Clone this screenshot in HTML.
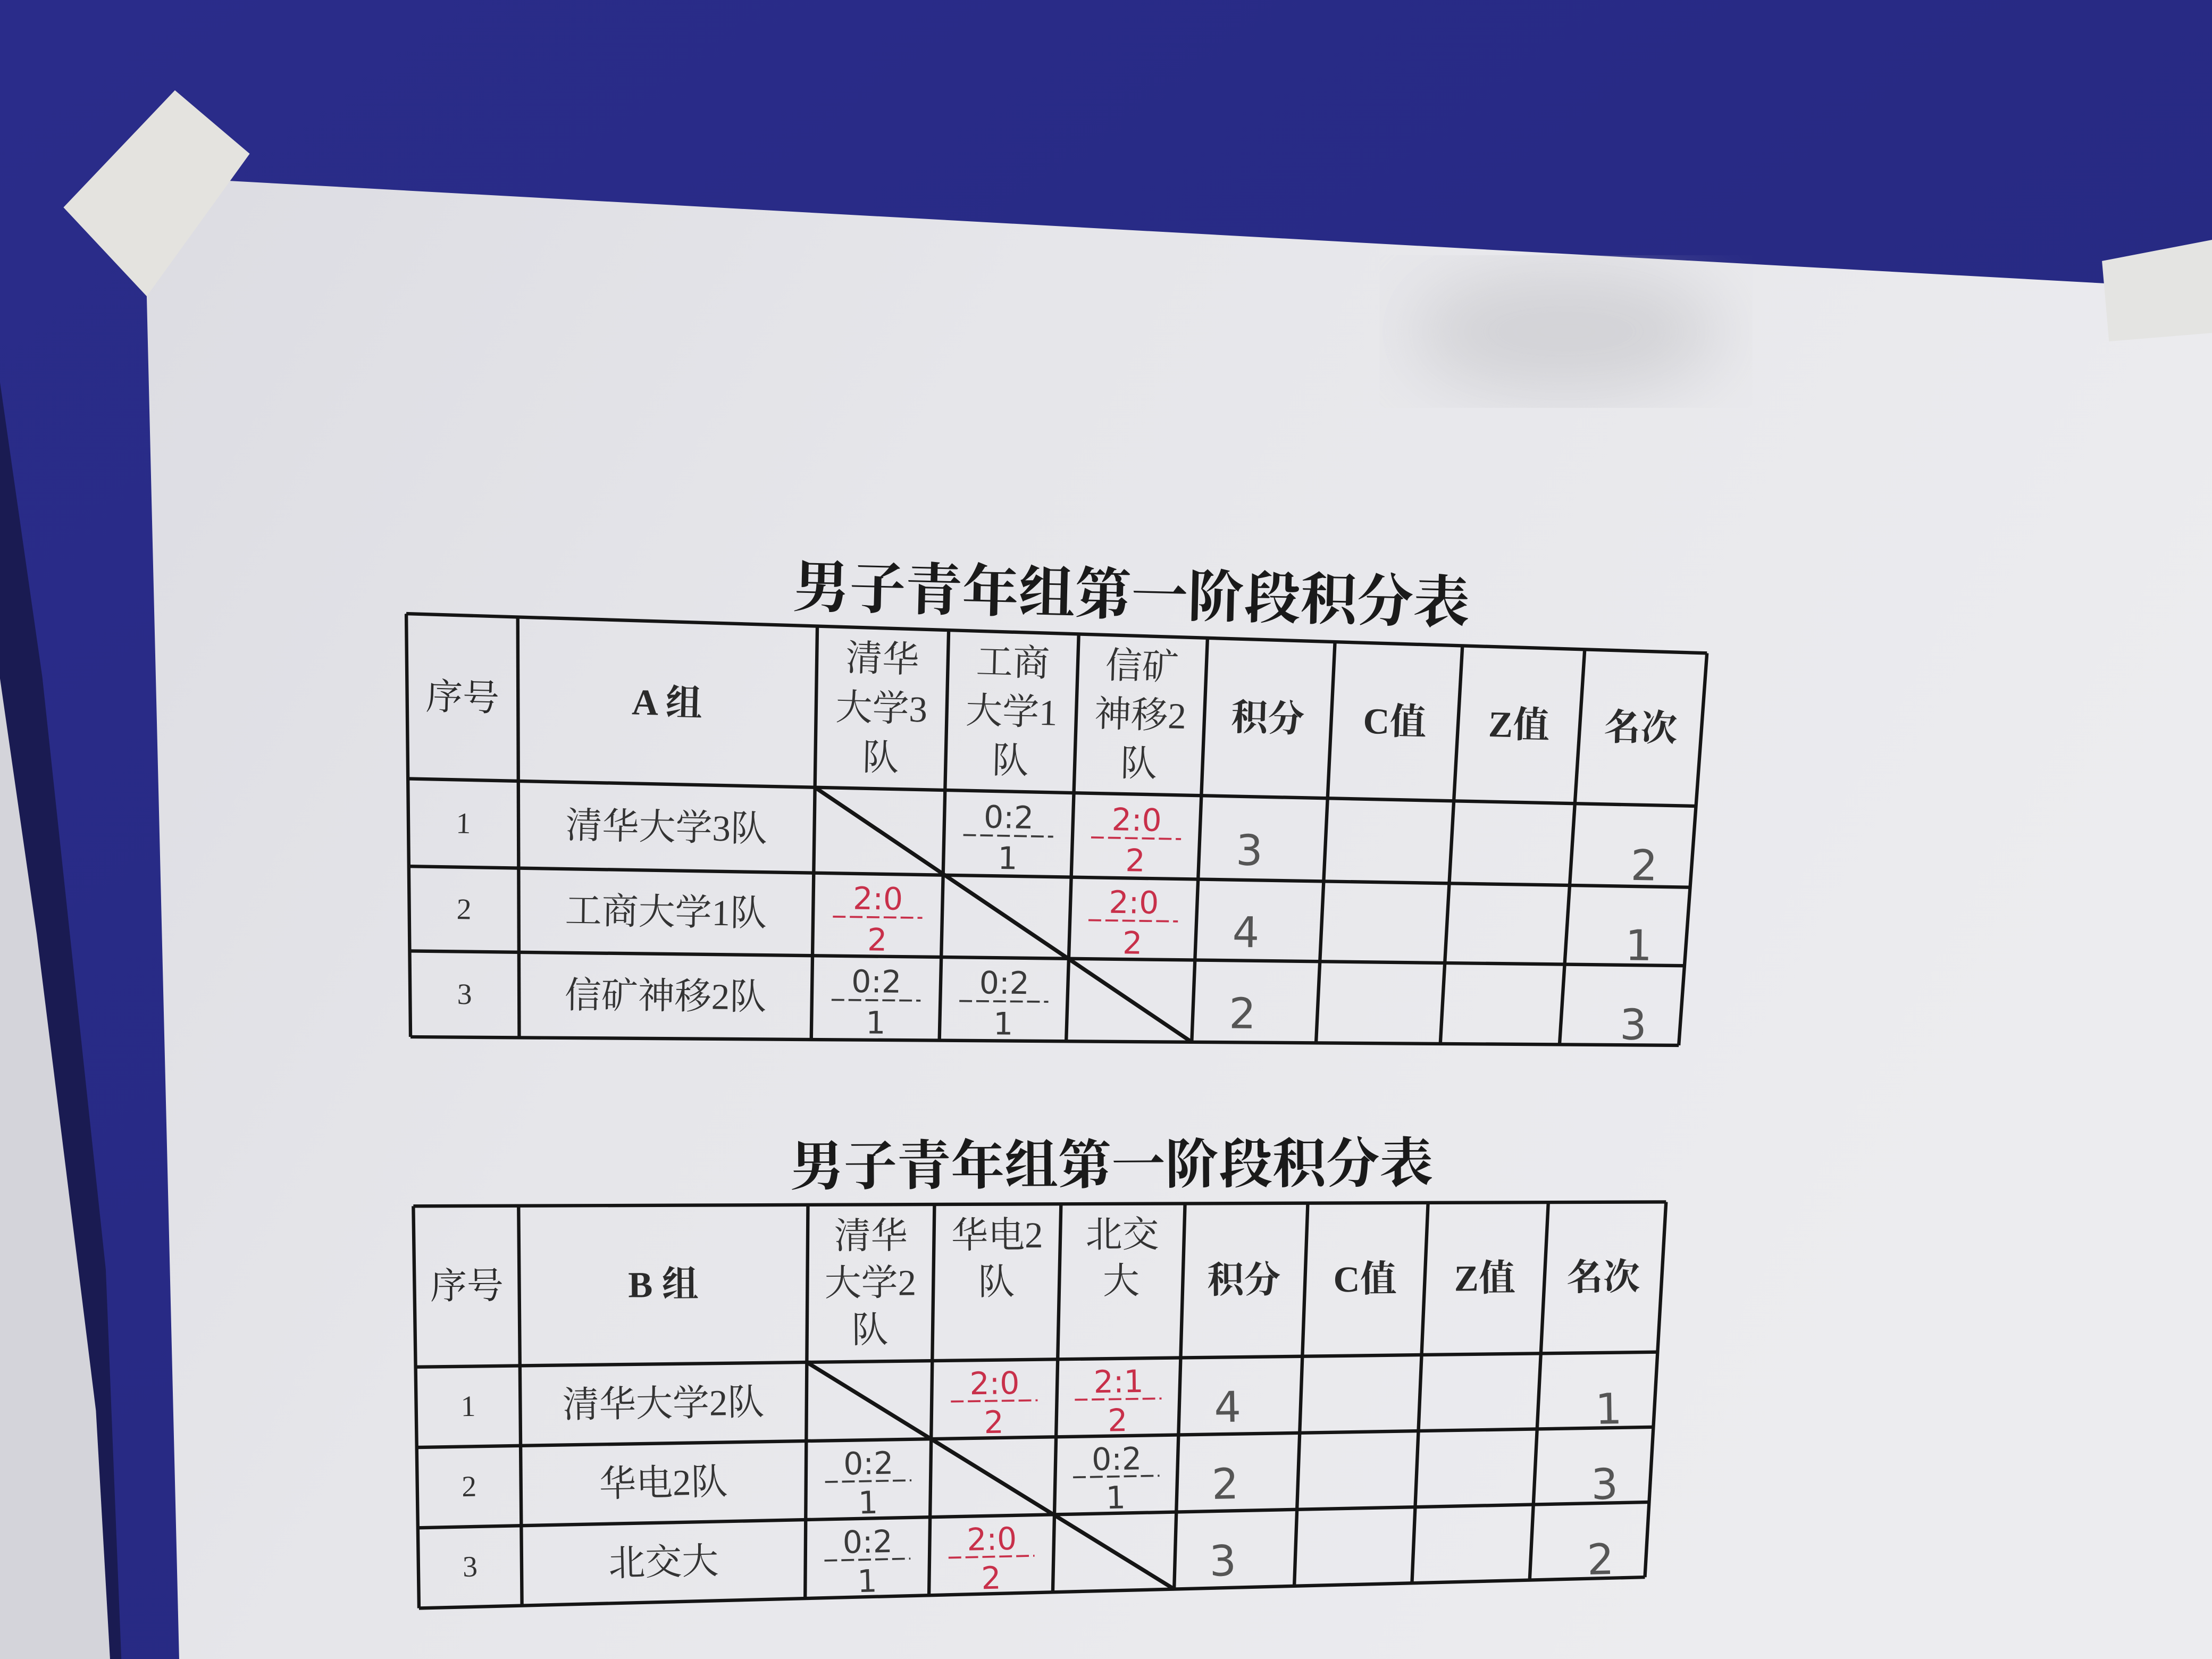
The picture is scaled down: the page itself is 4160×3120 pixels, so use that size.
<!DOCTYPE html>
<html><head><meta charset="utf-8">
<style>
html,body{margin:0;padding:0;background:#2b2f8e;}
svg{display:block}
</style></head>
<body>
<svg id="s" width="4160" height="3120" viewBox="0 0 1568 1176" xmlns="http://www.w3.org/2000/svg">
<defs>
<linearGradient id="bg" x1="0" y1="0" x2="1" y2="1">
<stop offset="0" stop-color="#2a2c8a"/><stop offset="1" stop-color="#25287e"/>
</linearGradient>
<linearGradient id="pp" x1="0" y1="0" x2="1" y2="0.4">
<stop offset="0" stop-color="#dcdce2"/><stop offset="0.4" stop-color="#e6e6ea"/><stop offset="1" stop-color="#ececef"/>
</linearGradient>
<filter id="bl"><feGaussianBlur stdDeviation="25"/></filter>
</defs>
<rect width="1568" height="1176" fill="url(#bg)"/>
<polygon points="0,271 30,480 75,900 86,1176 0,1176" fill="#1a1b52"/>
<polygon points="0,481 26,662 68,1000 78,1176 0,1176" fill="#d4d4da"/>
<polygon points="104,210 104,125 1568,205 1568,1176 127,1176" fill="url(#pp)"/>
<ellipse cx="1110" cy="235" rx="110" ry="45" fill="#b8b8bc" opacity="0.45" filter="url(#bl)"/>
<polygon points="45,147 124,64 177,109 104,210" fill="#e4e3df"/>
<polygon points="1490,185 1568,170 1568,236 1495,242" fill="#e4e4e2"/>
<g id="g"></g>
</svg>
<script>
var out='';
function P(q,u,v){var x=(1-u)*(1-v)*q[0][0]+u*(1-v)*q[1][0]+u*v*q[2][0]+(1-u)*v*q[3][0];
var y=(1-u)*(1-v)*q[0][1]+u*(1-v)*q[1][1]+u*v*q[2][1]+(1-u)*v*q[3][1];return[x,y];}
function L(a,b,w){out+='<line x1="'+a[0]+'" y1="'+a[1]+'" x2="'+b[0]+'" y2="'+b[1]+'" stroke="#151515" stroke-width="'+(w||2.4)+'"/>';}
function T(q,u,v,s,fs,opt){opt=opt||{};var p=P(q,u,v);var a=P(q,0,v),b=P(q,1,v);
var ang=Math.atan2(b[1]-a[1],b[0]-a[0])*180/Math.PI;
out+='<text x="0" y="0" transform="translate('+p[0]+','+p[1]+') rotate('+ang+')" text-anchor="middle" dominant-baseline="central" font-size="'+fs+'" fill="'+(opt.c||'#333')+'" font-weight="'+(opt.b?'bold':'normal')+'" font-family="'+(opt.f||'Liberation Serif, Noto Serif CJK SC, serif')+'">'+s+'</text>';}
function table(q,cols,rows,hdr,data){
for(var i=0;i<rows.length;i++)L(P(q,0,rows[i]),P(q,1,rows[i]));
for(var j=0;j<cols.length;j++)L(P(q,cols[j],0),P(q,cols[j],1));
L(P(q,cols[2],rows[1]),P(q,cols[5],1),2.8);
function cu(j){return (cols[j]+cols[j+1])/2;}
var hv=(rows[0]+rows[1])/2;
for(var j=0;j<9;j++){var h=hdr[j];if(typeof h=='string'){T(q,cu(j),hv,h,26,{b:(j==1||j>=5),c:'#2a2a2a'});}
else{for(var k=0;k<3;k++)T(q,cu(j),hv+(k-1)*0.12,h[k],26,{c:'#333'});}}
for(var r=0;r<3;r++){var rv=(rows[r+1]+rows[r+2])/2;var d=data[r];
T(q,cu(0),rv,d[0],21);T(q,cu(1),rv,d[1],26);
for(var j=2;j<5;j++){var sc=d[j];if(!sc)continue;var red=sc[2];var col=red?'#c8304a':'#3a3a3a';
var p1=P(q,cu(j)-0.035,rv+0.005),p2=P(q,cu(j)+0.035,rv+0.005);
out+='<line x1="'+p1[0]+'" y1="'+p1[1]+'" x2="'+p2[0]+'" y2="'+p2[1]+'" stroke="'+col+'" stroke-width="1.4" stroke-dasharray="9,3"/>';
T(q,cu(j),rv-0.04,sc[0],22,{c:col,f:'DejaVu Sans, sans-serif'});
T(q,cu(j),rv+0.06,sc[1],22,{c:col,f:'DejaVu Sans, sans-serif'});}
T(q,cu(5)-0.01,rv+0.03,d[5],30,{c:'#555',f:'DejaVu Sans, sans-serif'});
T(q,cu(8)+0.01,rv+0.05,d[6],30,{c:'#555',f:'DejaVu Sans, sans-serif'});}
}
var cols=[0,.0857,.316,.417,.517,.616,.714,.812,.906,1],rows=[0,.39,.597,.797,1];
table([[288,435],[1210,463],[1190,741],[291,735]],cols,rows,
['序号','A 组',['清华','大学3','队'],['工商','大学1','队'],['信矿','神移2','队'],'积分','C值','Z值','名次'],
[['1','清华大学3队',null,['0:2','1'],['2:0','2',1],'3','2'],
 ['2','工商大学1队',['2:0','2',1],null,['2:0','2',1],'4','1'],
 ['3','信矿神移2队',['0:2','1'],['0:2','1'],null,'2','3']]);
var colsB=[0,.084,.315,.416,.517,.616,.714,.810,.906,1],rowsB=[0,.40,.60,.80,1];
table([[293,855],[1181,852],[1166,1118],[297,1140]],colsB,rowsB,
['序号','B 组',['清华','大学2','队'],['华电2','队',''],['北交','大',''],'积分','C值','Z值','名次'],
[['1','清华大学2队',null,['2:0','2',1],['2:1','2',1],'4','1'],
 ['2','华电2队',['0:2','1'],null,['0:2','1'],'2','3'],
 ['3','北交大',['0:2','1'],['2:0','2',1],null,'3','2']]);
out+='<text x="802" y="422" transform="rotate(1.4 802 422)" text-anchor="middle" dominant-baseline="central" font-size="40" font-weight="bold" fill="#1a1a1a" font-family="Liberation Serif, Noto Serif CJK SC, serif">男子青年组第一阶段积分表</text>';
out+='<text x="788" y="826" transform="rotate(-0.3 788 826)" text-anchor="middle" dominant-baseline="central" font-size="38" font-weight="bold" fill="#1a1a1a" font-family="Liberation Serif, Noto Serif CJK SC, serif">男子青年组第一阶段积分表</text>';
document.getElementById('g').innerHTML=out;
</script>
</body></html>
